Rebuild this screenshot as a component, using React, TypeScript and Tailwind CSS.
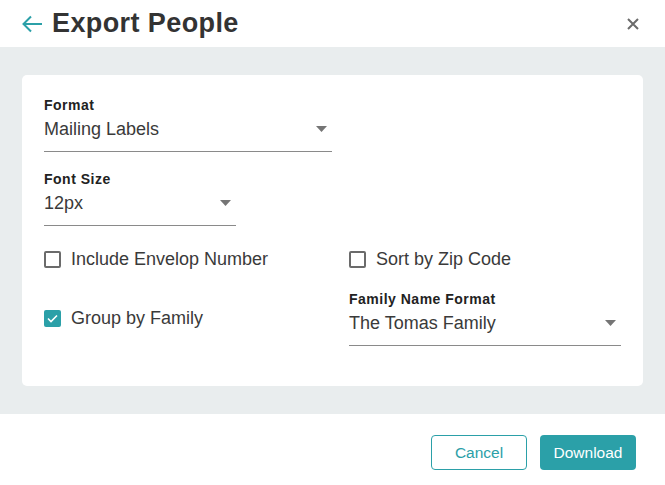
import { useState } from 'react';

const FONT = { fontFamily: '"Liberation Sans", Arial, sans-serif' };

function Caret() {
  return (
    <svg width="11" height="6" viewBox="0 0 11 6" className="shrink-0">
      <path d="M0 0h11L5.5 6z" fill="#757575" />
    </svg>
  );
}

function SelectField({ label, value, width }: { label: string; value: string; width: string }) {
  return (
    <div className={`${width} border-b border-[#8a8a8a] pb-[10px]`}>
      <div className="text-[14px] leading-[16px] font-bold tracking-[0.5px] text-[#222]">{label}</div>
      <div className="mt-1 flex h-6 items-center justify-between pr-[5px]">
        <span className="text-[18px] leading-6 text-[#3a3a3a]">{value}</span>
        <Caret />
      </div>
    </div>
  );
}

function Checkbox({ label, checked, onToggle }: { label: string; checked: boolean; onToggle: () => void }) {
  return (
    <button type="button" onClick={onToggle} className="flex items-center gap-[10px] text-left">
      {checked ? (
        <span className="flex h-[17px] w-[17px] items-center justify-center rounded-[2px] bg-[#2ba0a8]">
          <svg width="11" height="9" viewBox="0 0 11 9">
            <path d="M1 4.5l3 3L10 1.5" fill="none" stroke="#fff" strokeWidth="1.6" />
          </svg>
        </span>
      ) : (
        <span className="h-[17px] w-[17px] rounded-[2px] border-2 border-[#6b6b6b] bg-white" />
      )}
      <span className="text-[18px] leading-6 text-[#3a3a3a]">{label}</span>
    </button>
  );
}

export default function App() {
  const [envelope, setEnvelope] = useState(false);
  const [zip, setZip] = useState(false);
  const [group, setGroup] = useState(true);

  return (
    <div className="flex h-[485px] w-[665px] flex-col bg-white" style={FONT}>
      {/* header */}
      <div className="flex h-[47px] items-center justify-between px-[22px] pr-[26px]">
        <div className="flex items-center gap-[9px]">
          <svg width="21" height="18" viewBox="0 0 21 18">
            <path d="M20 9H2M9 1.5L1.5 9 9 16.5" fill="none" stroke="#2ba0a8" strokeWidth="2" />
          </svg>
          <h1 className="text-[27px] leading-none font-bold tracking-[0.4px] text-[#333]">Export People</h1>
        </div>
        <svg width="12" height="12" viewBox="0 0 12 12">
          <path d="M1 1l10 10M11 1L1 11" stroke="#6b6b6b" strokeWidth="2" />
        </svg>
      </div>

      {/* body */}
      <div className="bg-[#e9edee] px-[22px] py-[28px]">
        <div className="rounded-[5px] bg-white px-[22px] pt-[22px] pb-[40px]">
          <SelectField label="Format" value="Mailing Labels" width="w-[288px]" />
          <div className="mt-[19px]">
            <SelectField label="Font Size" value="12px" width="w-[192px]" />
          </div>

          <div className="mt-[21px] grid grid-cols-[305px_1fr]">
            <Checkbox label="Include Envelop Number" checked={envelope} onToggle={() => setEnvelope(!envelope)} />
            <Checkbox label="Sort by Zip Code" checked={zip} onToggle={() => setZip(!zip)} />
            <div className="mt-[35px]">
              <Checkbox label="Group by Family" checked={group} onToggle={() => setGroup(!group)} />
            </div>
            <div className="mt-[20px]">
              <SelectField label="Family Name Format" value="The Tomas Family" width="w-full" />
            </div>
          </div>
        </div>
      </div>

      {/* footer */}
      <div className="flex justify-end gap-[13px] pt-[21px] pr-[29px]">
        <button
          type="button"
          className="h-[35px] w-[96px] rounded-[4px] border border-[#2ba0a8] bg-white text-[15.5px] text-[#2ba0a8]"
        >
          Cancel
        </button>
        <button type="button" className="h-[35px] w-[96px] rounded-[4px] bg-[#2ba0a8] text-[15.5px] text-white">
          Download
        </button>
      </div>
    </div>
  );
}
